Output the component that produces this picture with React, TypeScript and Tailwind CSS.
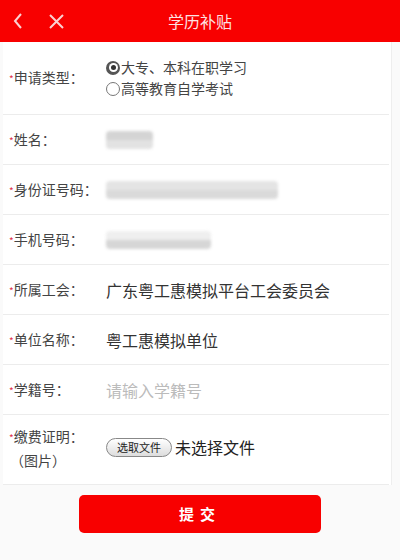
import React from "react";

// ─── helpers ─────────────────────────────────────────────────────────────────

const FONT = "font-['Noto_Sans_CJK_SC','Noto_Sans',sans-serif]";

function Label({ text }: { text: string }) {
  return (
    <p className="w-[97px] shrink-0 text-[14px] leading-5 text-[#444]">
      <span className="text-[10px] text-[#e0314a]">*</span>
      {text}
    </p>
  );
}

function Blur({ w, rows }: { w: number; rows: string[] }) {
  return (
    <div className="flex flex-col overflow-hidden rounded-[4px] blur-[1.5px]" style={{ width: w }}>
      {rows.map((c, i) => (
        <div key={i} className="h-[9px]" style={{ background: c }} />
      ))}
    </div>
  );
}

function Row({ label, children, h = "h-[50px]" }: { label: string; children?: React.ReactNode; h?: string }) {
  return (
    <div className={`flex ${h} items-center border-b border-[#ececec] pl-[6px]`}>
      <Label text={label} />
      <div className="flex items-center">{children}</div>
    </div>
  );
}

function Radio({ checked }: { checked?: boolean }) {
  return checked ? (
    <span className="flex h-[14px] w-[14px] items-center justify-center rounded-full bg-[#555]">
      <span className="flex h-[9px] w-[9px] items-center justify-center rounded-full bg-white">
        <span className="h-[5px] w-[5px] rounded-full bg-[#333]" />
      </span>
    </span>
  ) : (
    <span className="h-[14px] w-[14px] rounded-full border border-[#777] bg-white" />
  );
}

// ─── 메인 ─────────────────────────────────────────────────────────────────────

export default function App() {
  return (
    <div className={`${FONT} h-[560px] w-[400px] bg-[#fafafa]`}>
      {/* 헤더 */}
      <div className="relative flex h-[42px] items-center justify-center bg-[#f80000]">
        <div className="absolute left-[12px] top-[12px] flex items-center gap-[24px]">
          <svg width="12" height="18" viewBox="0 0 12 18" fill="none" stroke="#fbd0d0" strokeWidth="2">
            <path d="M9 2 L3 9 L9 16" />
          </svg>
          <svg width="17" height="17" viewBox="0 0 17 17" fill="none" stroke="#fbd0d0" strokeWidth="2">
            <path d="M2 2 L15 15 M15 2 L2 15" />
          </svg>
        </div>
        <p className="text-[16px] text-[#fde2e2]">学历补贴</p>
      </div>

      {/* 폼 */}
      <div className="mx-[3px] mr-[8px] border-r border-[#eeeeee] bg-white pr-[2px]">
        <Row label="申请类型：" h="h-[73px]">
          <div className="flex flex-col text-[14px] leading-[21px] text-[#444]">
            <div className="flex items-center gap-[1px]">
              <Radio checked />
              <span>大专、本科在职学习</span>
            </div>
            <div className="flex items-center gap-[1px]">
              <Radio />
              <span>高等教育自学考试</span>
            </div>
          </div>
        </Row>
        <Row label="姓名：">
          <Blur w={47} rows={["#d4d4d4", "#e2e2e2"]} />
        </Row>
        <Row label="身份证号码：">
          <Blur w={172} rows={["#e4e4e4", "#dadada"]} />
        </Row>
        <Row label="手机号码：">
          <Blur w={105} rows={["#efefef", "#d6d6d6"]} />
        </Row>
        <Row label="所属工会：">
          <span className="text-[16px] text-[#333]">广东粤工惠模拟平台工会委员会</span>
        </Row>
        <Row label="单位名称：">
          <span className="text-[16px] text-[#333]">粤工惠模拟单位</span>
        </Row>
        <Row label="学籍号：">
          <span className="text-[16px] text-[#bbb]">请输入学籍号</span>
        </Row>
        <div className="flex h-[70px] items-start border-b border-[#ececec] pl-[6px] pt-[10px]">
          <p className="w-[97px] shrink-0 text-[14px] leading-[22px] text-[#444]">
            <span className="text-[10px] text-[#e0314a]">*</span>缴费证明：
            <br />
            <span className="pl-[1px]">（图片）</span>
          </p>
          <div className="flex items-center gap-[3px] pt-[10px]">
            <span className="flex h-[19px] w-[66px] items-center justify-center rounded-full border border-[#888] bg-gradient-to-b from-white to-[#ddd] text-[11px] text-[#222]">
              选取文件
            </span>
            <span className="text-[16px] text-[#222]">未选择文件</span>
          </div>
        </div>
      </div>

      {/* 제출 */}
      <div className="flex justify-center pt-[10px]">
        <button className="flex h-[38px] w-[242px] items-center justify-center rounded-[5px] bg-[#f80000] text-[15px] font-bold tracking-[6px] text-white">
          提交
        </button>
      </div>
    </div>
  );
}
